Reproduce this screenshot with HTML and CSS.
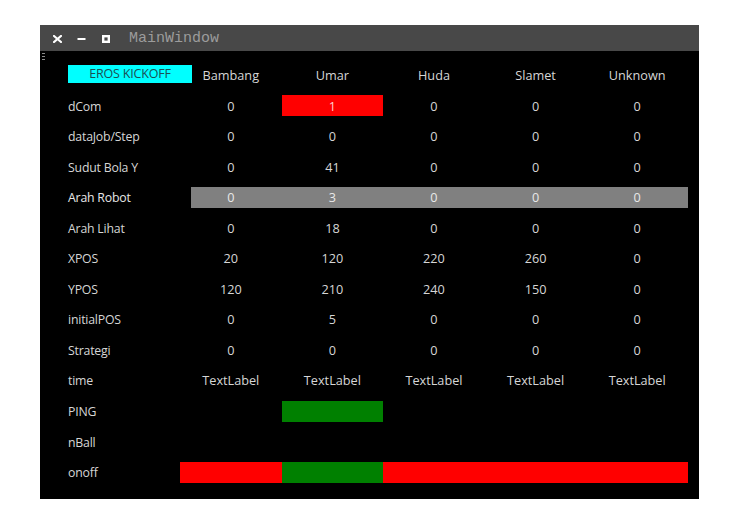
FILE: index.html
```html
<!DOCTYPE html>
<html>
<head>
<meta charset="utf-8">
<title>MainWindow</title>
<link rel="stylesheet" href="styles.css">
</head>
<body>
<div class="window">
  <div class="titlebar">
    <svg class="tb-icon close" width="9" height="8" viewBox="0 0 9 8"><path d="M1 1 L8 7 M8 1 L1 7" stroke="#fff" stroke-width="2.2" stroke-linecap="square"/></svg>
    <svg class="tb-icon min" width="9" height="8" viewBox="0 0 9 8"><path d="M0.5 4 H8.5" stroke="#fff" stroke-width="2"/></svg>
    <svg class="tb-icon max" width="8" height="8" viewBox="0 0 8 8"><rect x="1.2" y="1.2" width="5.6" height="5.6" fill="none" stroke="#fff" stroke-width="2.4"/></svg>
    <span class="title">MainWindow</span>
  </div>
  <div class="content">
    <svg class="grip" width="4" height="7" viewBox="0 0 4 7"><path d="M0 0.5 H3 M0 3.5 H3 M0 6.5 H3" stroke="#8a8a8a" stroke-width="1"/></svg>
    <div class="table">
      <div class="row head">
        <div class="label"><span class="btn">EROS KICKOFF</span></div>
        <div class="cell">Bambang</div>
        <div class="cell">Umar</div>
        <div class="cell">Huda</div>
        <div class="cell">Slamet</div>
        <div class="cell">Unknown</div>
      </div>
      <div class="row">
        <div class="label">dCom</div>
        <div class="cell">0</div>
        <div class="cell red">1</div>
        <div class="cell">0</div>
        <div class="cell">0</div>
        <div class="cell">0</div>
      </div>
      <div class="row">
        <div class="label">dataJob/Step</div>
        <div class="cell">0</div>
        <div class="cell">0</div>
        <div class="cell">0</div>
        <div class="cell">0</div>
        <div class="cell">0</div>
      </div>
      <div class="row">
        <div class="label">Sudut Bola Y</div>
        <div class="cell">0</div>
        <div class="cell">41</div>
        <div class="cell">0</div>
        <div class="cell">0</div>
        <div class="cell">0</div>
      </div>
      <div class="row band">
        <div class="label">Arah Robot</div>
        <div class="cell">0</div>
        <div class="cell">3</div>
        <div class="cell">0</div>
        <div class="cell">0</div>
        <div class="cell">0</div>
      </div>
      <div class="row">
        <div class="label">Arah Lihat</div>
        <div class="cell">0</div>
        <div class="cell">18</div>
        <div class="cell">0</div>
        <div class="cell">0</div>
        <div class="cell">0</div>
      </div>
      <div class="row">
        <div class="label">XPOS</div>
        <div class="cell">20</div>
        <div class="cell">120</div>
        <div class="cell">220</div>
        <div class="cell">260</div>
        <div class="cell">0</div>
      </div>
      <div class="row">
        <div class="label">YPOS</div>
        <div class="cell">120</div>
        <div class="cell">210</div>
        <div class="cell">240</div>
        <div class="cell">150</div>
        <div class="cell">0</div>
      </div>
      <div class="row">
        <div class="label">initialPOS</div>
        <div class="cell">0</div>
        <div class="cell">5</div>
        <div class="cell">0</div>
        <div class="cell">0</div>
        <div class="cell">0</div>
      </div>
      <div class="row">
        <div class="label">Strategi</div>
        <div class="cell">0</div>
        <div class="cell">0</div>
        <div class="cell">0</div>
        <div class="cell">0</div>
        <div class="cell">0</div>
      </div>
      <div class="row">
        <div class="label">time</div>
        <div class="cell">TextLabel</div>
        <div class="cell">TextLabel</div>
        <div class="cell">TextLabel</div>
        <div class="cell">TextLabel</div>
        <div class="cell">TextLabel</div>
      </div>
      <div class="row">
        <div class="label">PING</div>
        <div class="cell"></div>
        <div class="cell green"></div>
        <div class="cell"></div>
        <div class="cell"></div>
        <div class="cell"></div>
      </div>
      <div class="row">
        <div class="label">nBall</div>
        <div class="cell"></div>
        <div class="cell"></div>
        <div class="cell"></div>
        <div class="cell"></div>
        <div class="cell"></div>
      </div>
      <div class="row">
        <div class="label">onoff</div>
        <div class="cell red"></div>
        <div class="cell green"></div>
        <div class="cell red"></div>
        <div class="cell red"></div>
        <div class="cell red"></div>
      </div>
    </div>
  </div>
</div>
</body>
</html>
```

FILE: styles.css
```css
html, body {
  margin: 0;
  padding: 0;
  background: #ffffff;
}

body {
  padding: 25px 0 0 40px;
  font-family: "Open Sans", "Noto Sans", sans-serif;
}

.window {
  width: 659px;
  height: 474px;
  background: #000;
  display: flex;
  flex-direction: column;
}

/* window decoration */
.titlebar {
  height: 26px;
  flex: none;
  background: #484848;
  display: flex;
  align-items: center;
  padding-left: 13px;
  box-sizing: border-box;
}

.tb-icon {
  display: block;
  margin-top: 1px;
}

.tb-icon.close { margin-right: 15px; }
.tb-icon.min { margin-right: 16px; }
.tb-icon.max { margin-right: 19px; }

.title {
  font-family: "Liberation Mono", "DejaVu Sans Mono", monospace;
  font-size: 15px;
  color: #9c9c9c;
  line-height: 1;
  margin-top: 1px;
}

/* central widget */
.content {
  flex: 1;
  position: relative;
  padding: 10.5px 11px 0 28px;
}

.grip {
  position: absolute;
  left: 2px;
  top: 2px;
}

.table {
  display: flex;
  flex-direction: column;
  gap: 9.55px;
  width: 620px;
}

.row {
  display: grid;
  grid-template-columns: 112px repeat(5, 101.6px);
  height: 21px;
  font-size: 12.7px;
  color: #d6d6d6;
}

.row.head {
  height: 24px;
}

/* highlighted row: grey band starts a little inside the first value column */
.row.band {
  background: linear-gradient(to right, transparent 123px, #808080 123px);
  color: #e8e8e8;
}

.label {
  display: flex;
  align-items: center;
  white-space: nowrap;
  font-size: 12.3px;
  letter-spacing: -0.2px;
  padding-top: 1px;
}

.cell {
  display: flex;
  align-items: center;
  justify-content: center;
  white-space: nowrap;
}

.head .cell {
  padding-top: 3px;
}

.btn {
  display: flex;
  align-items: center;
  justify-content: center;
  width: 124px;
  height: 18px;
  flex: none;
  background: #00ffff;
  color: #1c4f52;
  font-size: 12.5px;
  letter-spacing: -0.2px;
  margin-top: -1px;
}

.cell.red {
  background: #ff0000;
  color: #ffd0d0;
}

.cell.green {
  background: #008000;
}
```
